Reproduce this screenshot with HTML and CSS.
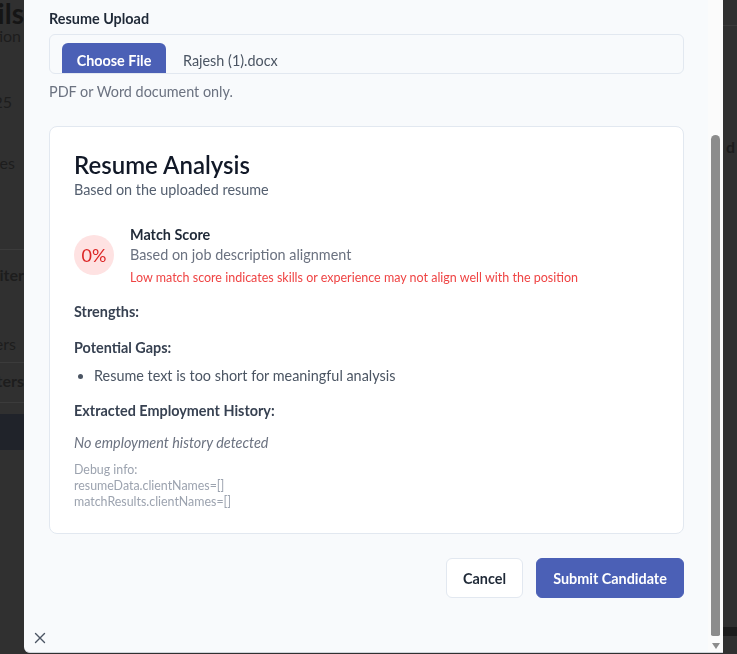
FILE: index.html
```html
<!DOCTYPE html>
<html lang="en">
<head>
<meta charset="utf-8">
<title>Resume Upload</title>
<link rel="stylesheet" href="styles.css">
</head>
<body>
<div class="page">
  <div class="bg-left">
    <div class="bg-row bg-title"><span>Details</span></div>
    <div class="bg-row bg-sub"><span>Position</span></div>
    <div class="bg-row bg-date"><span>Nov 25</span></div>
    <div class="bg-row bg-ces"><span>Services</span></div>
    <div class="bg-line bg-line1"></div>
    <div class="bg-row bg-bold bg-r1"><span>Recruiter</span></div>
    <div class="bg-row bg-r2"><span>Managers</span></div>
    <div class="bg-line bg-line2"></div>
    <div class="bg-row bg-bold bg-r3"><span>Recruiters</span></div>
    <div class="bg-line bg-line3"></div>
    <div class="bg-band"></div>
  </div>
  <div class="bg-right">
    <div class="bg-line bg-rline"></div>
    <div class="bg-row bg-bold bg-rd"><span>d</span></div>
    <div class="bg-band2"></div>
  </div>
</div>

<div class="modal">
  <div class="modal-body">
    <div class="field-label">Resume Upload</div>
    <div class="file-box">
      <span class="file-btn">Choose File</span>
      <span class="file-name">Rajesh (1).docx</span>
    </div>
    <div class="help">PDF or Word document only.</div>

    <div class="card">
      <div class="card-title">Resume Analysis</div>
      <div class="card-sub">Based on the uploaded resume</div>

      <div class="score-row">
        <div class="score-circle">0%</div>
        <div class="score-text">
          <div class="score-label">Match Score</div>
          <div class="score-desc">Based on job description alignment</div>
          <div class="score-warn">Low match score indicates skills or experience may not align well with the position</div>
        </div>
      </div>

      <div class="section-h sec-strengths">Strengths:</div>
      <div class="section-h sec-gaps">Potential Gaps:</div>
      <ul class="gap-list">
        <li>Resume text is too short for meaningful analysis</li>
      </ul>
      <div class="section-h sec-history">Extracted Employment History:</div>
      <div class="empty">No employment history detected</div>
      <div class="debug">
        <div>Debug info:</div>
        <div>resumeData.clientNames=[]</div>
        <div>matchResults.clientNames=[]</div>
      </div>
    </div>

    <div class="actions">
      <button class="btn btn-cancel">Cancel</button>
      <button class="btn btn-primary">Submit Candidate</button>
    </div>

    <button class="close" aria-label="Close">
      <svg width="12" height="12" viewBox="0 0 12 12"><path d="M1.5 1.5 L10.5 10.5 M10.5 1.5 L1.5 10.5" stroke="#4b5563" stroke-width="1.4" stroke-linecap="round" fill="none"/></svg>
    </button>
  </div>
  <div class="scrollbar">
    <div class="thumb"></div>
    <div class="arrow"></div>
  </div>
</div>
</body>
</html>
```

FILE: styles.css
```css
* { box-sizing: border-box; }
html, body { margin: 0; padding: 0; }
body {
  background: #303030;
  font-family: Lato, "Liberation Sans", sans-serif;
  width: 737px;
  height: 654px;
  overflow: hidden;
}

/* dimmed page behind the modal */
.page {
  display: flex;
  justify-content: space-between;
  height: 654px;
}
.bg-left { width: 24px; }
.bg-right { width: 14px; }
.bg-row {
  display: flex;
  justify-content: flex-end;
  overflow: hidden;
  white-space: nowrap;
  color: #1d1d1d;
  font-size: 16px;
  height: 20px;
  line-height: 20px;
}
.bg-right .bg-row { justify-content: flex-start; }
.bg-bold { font-weight: 700; }
.bg-title { font-size: 28px; font-weight: 700; height: 26px; line-height: 26px; color: #151515; }
.bg-sub { margin-top: 0; padding-right: 3px; }
.bg-date { margin-top: 46px; padding-right: 12px; }
.bg-ces { margin-top: 41px; padding-right: 9px; }
.bg-line { height: 1px; background: #3b3b3b; }
.bg-line1 { margin-top: 76px; }
.bg-r1 { margin-top: 15px; }
.bg-r2 { margin-top: 49px; padding-right: 8px; }
.bg-line2 { margin-top: 8px; }
.bg-r3 { margin-top: 8px; }
.bg-line3 { margin-top: 11px; }
.bg-band { margin-top: 11px; height: 36px; background: #20232a; }
.bg-rline { margin-top: 25px; }
.bg-rd { margin-top: 111px; padding-left: 3px; }
.bg-band2 { margin-top: 470px; height: 9px; background: #1c1c1c; }

/* modal */
.modal {
  position: fixed;
  left: 24px;
  top: 0;
  width: 699px;
  height: 653px;
  display: flex;
  background: #f8fafc;
  border-bottom: 1px solid #cfd4da;
  border-bottom-left-radius: 6px;
  overflow: hidden;
}
.modal-body {
  flex: 1;
  position: relative;
  padding: 9px 24px 0 25px;
}
.field-label {
  font-size: 14.4px;
  font-weight: 700;
  line-height: 20px;
  color: #1f2937;
}
.file-box {
  margin-top: 5px;
  height: 40px;
  border: 1px solid #e2e8f0;
  border-radius: 6px;
  background: #f8fafc;
  overflow: hidden;
  display: flex;
  align-items: flex-start;
  padding: 8px 12px 0;
}
.file-btn {
  display: block;
  width: 104px;
  height: 40px;
  padding-top: 8px;
  text-align: center;
  background: #4b60b6;
  color: #ffffff;
  font-size: 14.4px;
  font-weight: 700;
  line-height: 20px;
  border-radius: 6px;
}
.file-name {
  margin-left: 17px;
  padding-top: 8px;
  font-size: 14.4px;
  line-height: 20px;
  color: #4b5563;
}
.help {
  margin-top: 8px;
  font-size: 14.4px;
  line-height: 20px;
  color: #6b7280;
}

.card {
  margin-top: 24px;
  background: #ffffff;
  border: 1px solid #e2e8f0;
  border-radius: 8px;
  padding: 23px 24px 23px;
}
.card-title {
  font-size: 24px;
  font-weight: 600;
  line-height: 30px;
  color: #111827;
}
.card-sub {
  font-size: 14.4px;
  line-height: 20px;
  color: #556070;
}
.score-row {
  margin-top: 25px;
  display: flex;
  align-items: flex-start;
}
.score-circle {
  margin-top: 10px;
  width: 40px;
  height: 40px;
  border-radius: 50%;
  background: #fee2e2;
  color: #dc2626;
  font-size: 18px;
  display: flex;
  align-items: center;
  justify-content: center;
  flex-shrink: 0;
}
.score-text { margin-left: 16px; }
.score-label {
  font-size: 14.4px;
  font-weight: 700;
  line-height: 20px;
  color: #1f2937;
}
.score-desc {
  font-size: 14.4px;
  line-height: 20px;
  color: #6b7280;
}
.score-warn {
  margin-top: 5px;
  font-size: 12.5px;
  line-height: 16px;
  color: #ef4444;
}
.section-h {
  font-size: 14.4px;
  font-weight: 700;
  line-height: 20px;
  color: #374151;
}
.sec-strengths { margin-top: 16px; }
.sec-gaps { margin-top: 16px; }
.gap-list {
  margin: 8px 0 0;
  padding-left: 20px;
  font-size: 14.4px;
  line-height: 20px;
  color: #4b5563;
}
.sec-history { margin-top: 15px; }
.empty {
  margin-top: 12px;
  font-size: 14.4px;
  line-height: 20px;
  font-style: italic;
  color: #6b7280;
}
.debug {
  margin-top: 9px;
  font-size: 12.4px;
  line-height: 16px;
  color: #9ca3af;
}

.actions {
  margin-top: 24px;
  display: flex;
  justify-content: flex-end;
  gap: 13px;
}
.btn {
  height: 40px;
  border-radius: 6px;
  font-family: inherit;
  font-size: 14.4px;
  font-weight: 700;
  cursor: pointer;
}
.btn-cancel {
  width: 77px;
  background: #ffffff;
  border: 1px solid #e2e8f0;
  color: #1f2937;
}
.btn-primary {
  width: 148px;
  background: #4b60b6;
  border: 1px solid #4b60b6;
  color: #ffffff;
}
.close {
  position: absolute;
  left: 10px;
  top: 632px;
  width: 12px;
  height: 12px;
  padding: 0;
  border: 0;
  background: transparent;
  display: flex;
}

.scrollbar {
  width: 15px;
  background: #fbfbfb;
  display: flex;
  flex-direction: column;
  align-items: center;
  padding-top: 135px;
}
.thumb {
  width: 9px;
  height: 501px;
  background: #8c8c8c;
  border-radius: 5px 5px 2px 2px;
}
.arrow {
  margin-top: 7px;
  width: 0;
  height: 0;
  border-left: 4.5px solid transparent;
  border-right: 4.5px solid transparent;
  border-top: 6px solid #8c8c8c;
}
```
